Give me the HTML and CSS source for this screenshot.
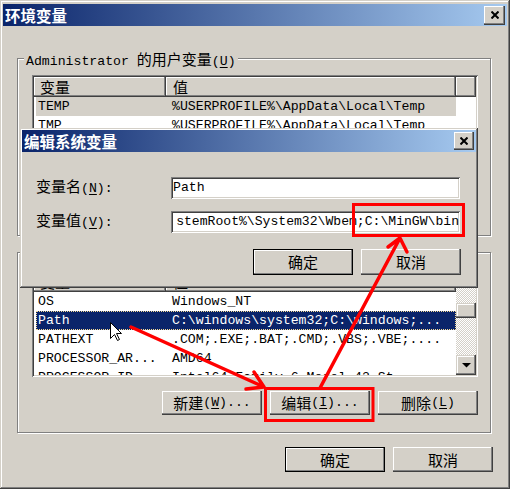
FILE: index.html
```html
<!DOCTYPE html>
<html lang="zh-CN">
<head>
<meta charset="utf-8">
<title>环境变量</title>
<link rel="stylesheet" href="styles.css">
</head>
<body>
<div class="window">
  <div class="titlebar">
    <span class="title">环境变量</span>
    <span class="close"><svg width="8" height="8" viewBox="0 0 8 8"><path d="M0.5 0.5L7.5 7.5M7.5 0.5L0.5 7.5" stroke="#000" stroke-width="2"/></svg></span>
  </div>
  <div class="content">
    <div class="group g1">
      <span class="legend">Administrator <span class="zh">的用户变量</span>(<u>U</u>)</span>
      <div class="list l1">
        <div class="header">
          <div class="hc c1"><span class="zh">变量</span></div>
          <div class="hc c2"><span class="zh">值</span></div>
          <div class="hc fill"></div>
        </div>
        <div class="row inactive"><span class="cell c1">TEMP</span><span class="cell c2">%USERPROFILE%\AppData\Local\Temp</span></div>
        <div class="row"><span class="cell c1">TMP</span><span class="cell c2">%USERPROFILE%\AppData\Local\Temp</span></div>
      </div>
    </div>
    <div class="group g2">
      <span class="legend"><span class="zh">系统变量</span>(<u>S</u>)</span>
      <div class="list l2">
        <div class="listmain">
          <div class="header">
            <div class="hc c1"><span class="zh">变量</span></div>
            <div class="hc c2"><span class="zh">值</span></div>
          </div>
          <div class="row"><span class="cell c1">OS</span><span class="cell c2">Windows_NT</span></div>
          <div class="row selected"><span class="cell c1">Path</span><span class="cell c2">C:\windows\system32;C:\windows;...</span></div>
          <div class="row"><span class="cell c1">PATHEXT</span><span class="cell c2">.COM;.EXE;.BAT;.CMD;.VBS;.VBE;....</span></div>
          <div class="row"><span class="cell c1">PROCESSOR_AR...</span><span class="cell c2">AMD64</span></div>
          <div class="row"><span class="cell c1">PROCESSOR_ID...</span><span class="cell c2">Intel64 Family 6 Model 42 St...</span></div>
        </div>
        <div class="vscroll">
          <div class="sb-btn sb-up"></div>
          <div class="sb-track sb-t1"></div>
          <div class="sb-btn sb-thumb"></div>
          <div class="sb-track sb-t2"></div>
          <div class="sb-btn sb-down"><svg width="9" height="5" viewBox="0 0 9 5"><polygon points="0,0 9,0 4.5,4.5" fill="#000"/></svg></div>
        </div>
      </div>
      <div class="btnrow">
        <button class="btn btn-sm"><span class="zh">新建</span>(<u>W</u>)...</button>
        <button class="btn btn-sm"><span class="zh">编辑</span>(<u>I</u>)...</button>
        <button class="btn btn-sm"><span class="zh">删除</span>(<u>L</u>)</button>
      </div>
    </div>
    <div class="main-btns">
      <button class="btn btn-main default"><span class="zh">确定</span></button>
      <button class="btn btn-main"><span class="zh">取消</span></button>
    </div>
  </div>

  <div class="dialog">
    <div class="titlebar">
      <span class="title">编辑系统变量</span>
      <span class="close close-sm"><svg width="8" height="8" viewBox="0 0 8 8"><path d="M0.5 0.5L7.5 7.5M7.5 0.5L0.5 7.5" stroke="#000" stroke-width="2"/></svg></span>
    </div>
    <div class="dlg-body">
      <div class="form">
        <span class="lbl"><span class="zh">变量名</span>(<u>N</u>):</span>
        <div class="field"><span>Path</span></div>
        <span class="lbl"><span class="zh">变量值</span>(<u>V</u>):</span>
        <div class="field scrolled"><span>stemRoot%\System32\Wbem;C:\MinGW\bin</span></div>
      </div>
      <div class="dlg-btns">
        <button class="btn btn-dlg default"><span class="zh">确定</span></button>
        <button class="btn btn-dlg"><span class="zh">取消</span></button>
      </div>
    </div>
  </div>

  <svg class="annot" width="510" height="489" viewBox="0 0 510 489">
    <g fill="none" stroke="#FF0000" stroke-width="3">
      <rect x="353.5" y="204.5" width="110" height="31"/>
      <rect x="265.5" y="388.5" width="107.5" height="32"/>
    </g>
    <g fill="none" stroke="#FF0000" stroke-width="3.5" stroke-linecap="round" stroke-linejoin="round">
      <path d="M131 327 L264 387 M246 389 L264 387 L254 372"/>
      <path d="M320 388 L400 238 M388 247 L400 238 L407 252"/>
    </g>
    <path transform="translate(110.5 322.5)" d="M0 0 L0 16 L4 12 L7 18 L9 17 L6 11 L11 11 Z" fill="#fff" stroke="#000" stroke-width="1" stroke-linejoin="miter"/>
  </svg>
</div>
</body>
</html>
```

FILE: styles.css
```css
* { box-sizing: border-box; }

html, body {
  margin: 0;
  padding: 0;
}

body {
  width: 510px;
  height: 489px;
  overflow: hidden;
  background: #D4D0C8;
  font-family: "Liberation Mono", "Noto Sans CJK SC", monospace;
  font-size: 13.2px;
  color: #000;
}

.zh {
  font-family: "Noto Sans CJK SC", sans-serif;
  font-size: 15px;
}

u { text-decoration: underline; text-underline-offset: 2px; }

.window {
  position: relative;
  width: 510px;
  height: 489px;
  background: #D4D0C8;
  padding: 4px 3px 3px 3px;
  display: flex;
  flex-direction: column;
  box-shadow:
    inset -1px -1px 0 #404040,
    inset 1px 1px 0 #D4D0C8,
    inset -2px -2px 0 #808080,
    inset 2px 2px 0 #fff;
}

.titlebar {
  flex: none;
  height: 22px;
  display: flex;
  align-items: center;
  justify-content: space-between;
  padding: 0 2px;
  background: linear-gradient(90deg, #0A246A, #A6CAF0);
}

.title {
  color: #fff;
  font-family: "Noto Sans CJK SC", sans-serif;
  font-weight: 700;
  font-size: 15.5px;
  line-height: 22px;
}

.close {
  width: 21px;
  height: 19px;
  display: flex;
  align-items: center;
  justify-content: center;
  background: #D4D0C8;
  box-shadow:
    inset -1px -1px 0 #404040,
    inset -2px -2px 0 #808080,
    inset 1px 1px 0 #fff;
}

.close-sm {
  width: 20px;
  height: 18px;
}

.content {
  flex: 1;
  display: flex;
  flex-direction: column;
  padding: 32px 16px 0 14px;
}

.group {
  position: relative;
  border: 1px solid #808080;
  box-shadow: inset 1px 1px 0 #fff, 1px 1px 0 #fff;
}

.g1 {
  height: 178px;
  padding: 16px 12px 0 14px;
}

.g2 {
  height: 181px;
  margin-top: 16px;
  padding: 17px 12px 0 14px;
  display: flex;
  flex-direction: column;
}

.legend {
  position: absolute;
  top: -10px;
  left: 6px;
  padding: 0 2px;
  background: #D4D0C8;
  line-height: 19px;
  white-space: nowrap;
}

.list {
  background: #fff;
  padding: 2px;
  overflow: hidden;
  box-shadow:
    inset 1px 1px 0 #808080,
    inset -1px -1px 0 #fff,
    inset 2px 2px 0 #404040,
    inset -2px -2px 0 #D4D0C8;
}

.l1 { height: 150px; }

.l2 {
  flex: none;
  height: 107px;
  display: flex;
}

.listmain {
  width: 422px;
  overflow: hidden;
}

.header {
  display: flex;
  height: 20px;
}

.hc {
  height: 20px;
  line-height: 20px;
  background: #D4D0C8;
  white-space: nowrap;
  box-shadow:
    inset -1px -1px 0 #404040,
    inset -2px -2px 0 #808080,
    inset 1px 1px 0 #fff;
}

.hc.c1 { width: 132px; padding-left: 6px; }
.hc.c2 { width: 290px; padding-left: 7px; }
.hc.fill { flex: 1; }

.row {
  display: flex;
  height: 19px;
  line-height: 19px;
  margin-left: 2px;
  width: 420px;
  white-space: nowrap;
}

.cell { overflow: hidden; }
.cell.c1 { width: 130px; padding-left: 2px; }
.cell.c2 { flex: 1; padding-left: 6px; }

.row.inactive { background: #D4D0C8; }

.row.selected {
  background: #0A246A;
  color: #fff;
  outline: 1px dotted #F5DB95;
  outline-offset: -1px;
}

.vscroll {
  width: 20px;
  display: flex;
  flex-direction: column;
}

.sb-btn {
  background: #D4D0C8;
  box-shadow:
    inset -1px -1px 0 #404040,
    inset -2px -2px 0 #808080,
    inset 1px 1px 0 #D4D0C8,
    inset 2px 2px 0 #fff;
}

.sb-up { height: 16px; }
.sb-thumb { height: 15px; }

.sb-down {
  height: 20px;
  display: flex;
  align-items: center;
  justify-content: center;
}

.sb-track {
  background-color: #fff;
  background-image: conic-gradient(#D4D0C8 0 25%, #fff 0 50%, #D4D0C8 0 75%, #fff 0);
  background-size: 2px 2px;
}

.sb-t1 { height: 15px; }
.sb-t2 { flex: 1; }

.btnrow {
  display: flex;
  justify-content: flex-end;
  gap: 8px;
  margin-top: 14px;
}

.btn {
  appearance: none;
  border: 0;
  margin: 0;
  padding: 0;
  width: 100px;
  background: #D4D0C8;
  font: inherit;
  color: #000;
  display: flex;
  align-items: center;
  justify-content: center;
  line-height: 18px;
  white-space: nowrap;
  box-shadow:
    inset -1px -1px 0 #404040,
    inset -2px -2px 0 #808080,
    inset 1px 1px 0 #fff;
}

.btn.default {
  box-shadow:
    inset 0 0 0 1px #000,
    inset -2px -2px 0 #808080,
    inset 2px 2px 0 #fff;
}

.btn-sm { height: 24px; }
.btn-main { height: 25px; }
.btn-dlg { height: 26px; }

.main-btns {
  display: flex;
  justify-content: flex-end;
  gap: 8px;
  margin-top: 14px;
  margin-right: -2px;
}

.dialog {
  position: absolute;
  left: 20px;
  top: 128px;
  width: 458px;
  height: 160px;
  background: #D4D0C8;
  padding: 2px;
  display: flex;
  flex-direction: column;
  box-shadow:
    inset -1px -1px 0 #404040,
    inset 1px 1px 0 #D4D0C8,
    inset -2px -2px 0 #808080,
    inset 2px 2px 0 #fff;
}

.dlg-body {
  padding: 24px 16px 0 14px;
}

.form {
  display: grid;
  grid-template-columns: 135px 289px;
  row-gap: 11px;
  align-items: center;
}

.lbl {
  line-height: 20px;
  white-space: nowrap;
}

.field {
  height: 22px;
  background: #fff;
  padding: 2px 1px 2px 2px;
  line-height: 18px;
  white-space: nowrap;
  overflow: hidden;
  display: flex;
  box-shadow:
    inset 1px 1px 0 #808080,
    inset -1px -1px 0 #fff,
    inset 2px 2px 0 #404040,
    inset -2px -2px 0 #D4D0C8;
}

.field > span { flex: none; }

.field.scrolled {
  justify-content: flex-end;
  font-size: 13.1px;
}

.dlg-btns {
  display: flex;
  justify-content: flex-end;
  gap: 8px;
  margin-top: 16px;
  margin-right: -1px;
}

.annot {
  position: absolute;
  left: 0;
  top: 0;
  pointer-events: none;
}
```
